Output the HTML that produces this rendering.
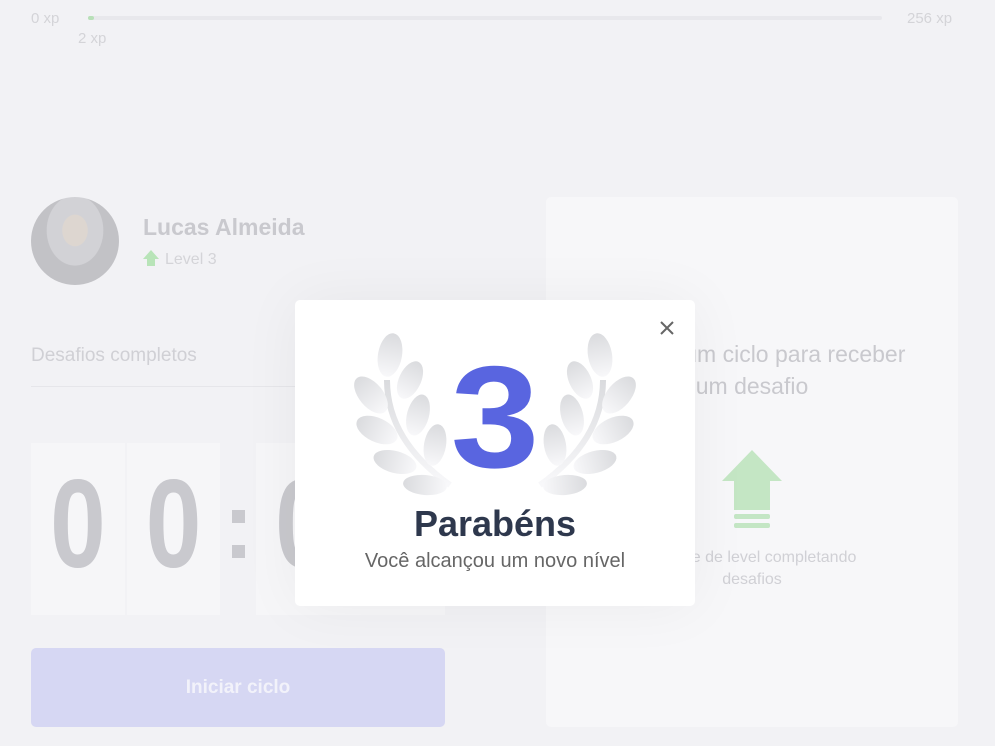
<!DOCTYPE html>
<html><head><meta charset="utf-8"><style>
*{margin:0;padding:0;box-sizing:border-box}
body{width:995px;height:746px;background:#f2f2f5;font-family:"Liberation Sans",Arial,sans-serif;position:relative;overflow:hidden}
.a{position:absolute}
.z{font-size:125px;color:#c9c9ce;line-height:130px;text-align:center;font-weight:bold;transform:scaleX(0.8)}
</style></head><body>
<div class="a" style="left:31px;top:10px;font-size:15px;color:#d4d4d8">0 xp</div>
<div class="a" style="left:88px;top:16px;width:794px;height:4px;background:#e8e8ec;border-radius:2px"></div>
<div class="a" style="left:88px;top:16px;width:6px;height:4px;background:#b8e0b8;border-radius:2px"></div>
<div class="a" style="left:78px;top:30px;font-size:15px;color:#d4d4d8">2 xp</div>
<div class="a" style="left:907px;top:10px;font-size:15px;color:#d4d4d8">256 xp</div>

<div class="a" style="left:31px;top:197px;width:88px;height:88px;border-radius:50%;background:radial-gradient(ellipse at 50% 38%,#ddd6d0 0 20%,#d2d2d6 21% 45%,#c2c2c6 46%)"></div>
<div class="a" style="left:143px;top:214px;font-size:23px;font-weight:bold;color:#c9c9ce">Lucas Almeida</div>
<div class="a" style="left:143px;top:250px;width:0;height:0;border-left:8px solid transparent;border-right:8px solid transparent;border-bottom:9px solid #b8e4b8"></div>
<div class="a" style="left:147px;top:258px;width:8px;height:8px;background:#b8e4b8"></div>
<div class="a" style="left:165px;top:251px;font-size:16px;color:#d4d4d8">Level 3</div>
<div class="a" style="left:31px;top:345px;font-size:19px;color:#d0d0d5">Desafios completos</div>
<div class="a" style="left:31px;top:386px;width:414px;height:1px;background:#e6e6ea"></div>

<div class="a" style="left:31px;top:443px;width:94px;height:172px;background:#f6f6f8"></div>
<div class="a" style="left:127px;top:443px;width:93px;height:172px;background:#f6f6f8"></div>
<div class="a" style="left:256px;top:443px;width:94px;height:172px;background:#f6f6f8"></div>
<div class="a" style="left:350px;top:443px;width:95px;height:172px;background:#f6f6f8"></div>
<div class="a z" style="left:31px;top:460px;width:94px">0</div>
<div class="a z" style="left:127px;top:460px;width:93px">0</div>
<div class="a" style="left:232px;top:510px;width:13px;height:13px;background:#c9c9ce"></div>
<div class="a" style="left:232px;top:545px;width:13px;height:13px;background:#c9c9ce"></div>
<div class="a z" style="left:256px;top:460px;width:94px">0</div>
<div class="a" style="left:31px;top:648px;width:414px;height:79px;background:#d6d7f3;border-radius:5px;color:#f2f2fa;font-size:19px;font-weight:bold;text-align:center;line-height:79px">Iniciar ciclo</div>

<div class="a" style="left:546px;top:197px;width:412px;height:530px;background:#f7f7f9;border-radius:5px"></div>
<div class="a" style="left:546px;top:338px;width:412px;text-align:center;font-size:23px;color:#c9c9ce;line-height:32px">Finalize um ciclo para receber<br>um desafio</div>
<svg class="a" style="left:720px;top:448px" width="64" height="84"><polygon points="32,2 62,33 50,33 50,62 14,62 14,33 2,33" fill="#c4e6c4"/><rect x="14" y="66" width="36" height="5" rx="2" fill="#c4e6c4"/><rect x="14" y="75" width="36" height="5" rx="2" fill="#c4e6c4"/></svg>
<div class="a" style="left:546px;top:547px;width:412px;text-align:center;font-size:16px;color:#d0d0d5;line-height:22px">Avance de level completando<br>desafios</div>

<div class="a" style="left:295px;top:300px;width:400px;height:306px;background:#fff;border-radius:5px;box-shadow:0 0 60px rgba(0,0,0,0.05)"></div>
<svg class="a" style="left:295px;top:300px" width="400" height="200">
<defs><linearGradient id="g" x1="0" y1="0" x2="0" y2="1"><stop offset="0" stop-color="#dadbde"/><stop offset="1" stop-color="#f8f8fa"/></linearGradient></defs>
<g id="L" fill="url(#g)">
<path d="M92 80 Q92 140 155 185" stroke="url(#g)" stroke-width="6" fill="none"/>
<ellipse cx="95" cy="55" rx="12" ry="22" transform="rotate(10 95 55)"/>
<ellipse cx="76" cy="95" rx="12" ry="22" transform="rotate(-40 76 95)"/>
<ellipse cx="115" cy="80" rx="11" ry="20" transform="rotate(25 115 80)"/>
<ellipse cx="82" cy="130" rx="12" ry="22" transform="rotate(-65 82 130)"/>
<ellipse cx="123" cy="115" rx="11" ry="21" transform="rotate(15 123 115)"/>
<ellipse cx="100" cy="162" rx="11" ry="22" transform="rotate(-75 100 162)"/>
<ellipse cx="140" cy="145" rx="11" ry="21" transform="rotate(10 140 145)"/>
<ellipse cx="130" cy="185" rx="10" ry="22" transform="rotate(-85 130 185)"/>
</g>
<use href="#L" transform="translate(400 0) scale(-1 1)"/>
</svg>
<svg class="a" style="left:659px;top:320px" width="16" height="16"><path d="M2 2L14 14M14 2L2 14" stroke="#666" stroke-width="2"/></svg>
<div class="a" style="left:295px;top:345px;width:400px;text-align:center;font-size:145px;font-weight:bold;color:#5965e0;line-height:145px;transform:scaleX(1.1)">3</div>
<div class="a" style="left:295px;top:503px;width:400px;text-align:center;font-size:36px;font-weight:bold;color:#2e384d">Parabéns</div>
<div class="a" style="left:295px;top:550px;width:400px;text-align:center;font-size:20px;color:#666">Você alcançou um novo nível</div>
</body></html>
